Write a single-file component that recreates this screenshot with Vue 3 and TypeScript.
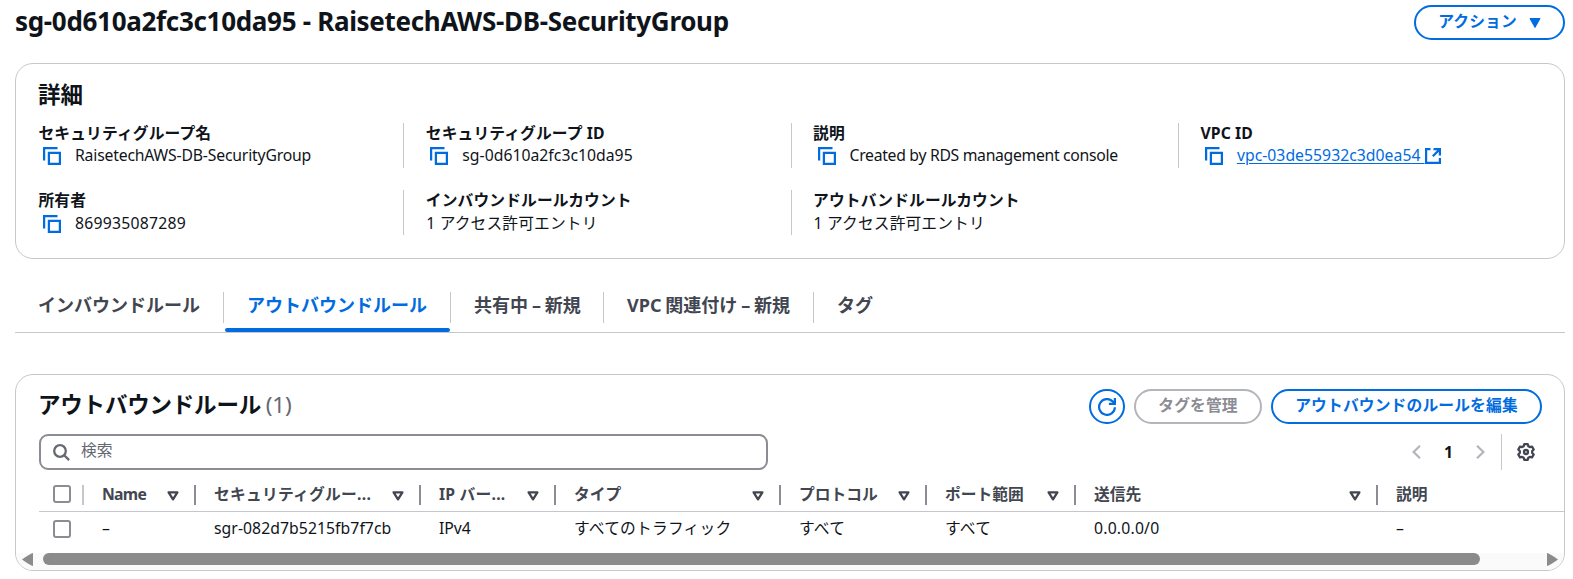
<script setup lang="ts">
interface Detail {
  label: string
  value: string
  copy?: boolean
  link?: boolean
  tracking?: number
}
interface Column {
  title: string
  value: string
  width: number
  titleTracking?: number
  tracking?: number
}
interface Tab {
  title: string
  width: number
}

const columnsOfDetails: Detail[][] = [
  [
    { label: 'セキュリティグループ名', value: 'RaisetechAWS-DB-SecurityGroup', copy: true, tracking: -0.18 },
    { label: '所有者', value: '869935087289', copy: true, tracking: 0.23 },
  ],
  [
    { label: 'セキュリティグループ ID', value: 'sg-0d610a2fc3c10da95', copy: true, tracking: 0.02 },
    { label: 'インバウンドルールカウント', value: '1 アクセス許可エントリ', tracking: 0.12 },
  ],
  [
    { label: '説明', value: 'Created by RDS management console', copy: true, tracking: -0.31 },
    { label: 'アウトバンドルールカウント', value: '1 アクセス許可エントリ', tracking: 0.12 },
  ],
  [{ label: 'VPC ID', value: 'vpc-03de55932c3d0ea54', copy: true, link: true, tracking: 0.03 }],
]

const tabs: Tab[] = [
  { title: 'インバウンドルール', width: 209 },
  { title: 'アウトバウンドルール', width: 227 },
  { title: '共有中 – 新規', width: 153 },
  { title: 'VPC 関連付け – 新規', width: 210 },
  { title: 'タグ', width: 90 },
]
const activeTab = 1

const columns: Column[] = [
  { title: 'Name', value: '–', width: 112, titleTracking: -0.7 },
  { title: 'セキュリティグルー...', value: 'sgr-082d7b5215fb7f7cb', width: 225, titleTracking: 0.25, tracking: 0.06 },
  { title: 'IP バー...', value: 'IPv4', width: 135, titleTracking: 0.2 },
  { title: 'タイプ', value: 'すべてのトラフィック', width: 225, tracking: 0.2 },
  { title: 'プロトコル', value: 'すべて', width: 146, tracking: 0.2 },
  { title: 'ポート範囲', value: 'すべて', width: 149, tracking: 0.2 },
  { title: '送信先', value: '0.0.0.0/0', width: 302, tracking: 0.2 },
  { title: '説明', value: '–', width: 187 },
]

const spacing = (n = 0) => ({ letterSpacing: n + 'px' })
</script>

<template>
  <main class="page">
    <header class="top">
      <h1>sg-0d610a2fc3c10da95 - RaisetechAWS-DB-SecurityGroup</h1>
      <button class="btn actions">
        <span>アクション</span>
        <svg class="caret" viewBox="0 0 12 10"><path d="M1 .5h10L6 9.5z" fill="currentColor" stroke="currentColor" stroke-linejoin="round" /></svg>
      </button>
    </header>

    <section class="card details">
      <h2>詳細</h2>
      <div class="detail-grid">
        <div v-for="(col, c) in columnsOfDetails" :key="c" class="detail-col">
          <div v-for="d in col" :key="d.label" class="detail" :class="{ ruled: c > 0 }">
            <div class="label">{{ d.label }}</div>
            <div class="value">
              <svg v-if="d.copy" class="copy" viewBox="0 0 18 18" fill="none" stroke="currentColor" stroke-width="2.25">
                <path d="M1.100 13.500V1.100h13.400" /><path d="M5.900 5.900h11v11h-11z" />
              </svg>
              <a v-if="d.link" class="link" :style="spacing(d.tracking)">{{ d.value }}&nbsp;</a>
              <span v-else :style="spacing(d.tracking)">{{ d.value }}</span>
              <svg v-if="d.link" class="external" viewBox="0 0 16 16" fill="none" stroke="currentColor" stroke-width="2.2">
                <path d="M5.500 1.100H1.100v13.800h13.800V10" /><path d="M8.500 1.100h6.400v6.400M14.900 1.100L7.800 8.200" />
              </svg>
            </div>
          </div>
        </div>
      </div>
    </section>

    <nav class="tabs">
      <div v-for="(t, i) in tabs" :key="t.title" class="tab" :class="{ active: i === activeTab }" :style="{ width: t.width + 'px' }">
        <span>{{ t.title }}</span>
      </div>
    </nav>

    <section class="card rules">
      <div class="rules-head">
        <h2>アウトバウンドルール <span class="count">(1)</span></h2>
        <div class="buttons">
          <button class="btn refresh">
            <svg viewBox="0 0 18 18" fill="none" stroke="currentColor" stroke-width="2.200">
              <path d="M16.900 9.200a7.900 7.900 0 1 1-2.300-5.800l2 2" /><path d="M16.900 0v5.900h-6" />
            </svg>
          </button>
          <button class="btn manage">タグを管理</button>
          <button class="btn edit">アウトバウンドのルールを編集</button>
        </div>
      </div>

      <div class="tools">
        <div class="search">
          <svg viewBox="0 0 17 17" fill="none" stroke="currentColor" stroke-width="2.3">
            <circle cx="7" cy="7" r="5.800" /><path d="M11.200 11.200l4.900 4.900" />
          </svg>
          <span>検索</span>
        </div>
        <div class="pager">
          <svg class="chev" viewBox="0 0 9 14" fill="none" stroke="currentColor" stroke-width="2.2"><path d="M8 .8L1.600 7 8 13.200" /></svg>
          <span class="current">1</span>
          <svg class="chev" viewBox="0 0 9 14" fill="none" stroke="currentColor" stroke-width="2.2"><path d="M1 .8L7.400 7 1 13.200" /></svg>
          <div class="gear">
            <svg viewBox="0 0 18 18" fill="none" stroke="currentColor" stroke-width="2.3" stroke-linejoin="round">
              <path d="M7.300 1.200h3.400l.6 2 1.600.9 2.100-.5 1.700 2.900-1.500 1.500v2l1.500 1.500-1.700 2.900-2.100-.5-1.600.9-.6 2H7.300l-.6-2-1.600-.9-2.100.5-1.700-2.900L2.800 10V8L1.300 6.500 3 3.600l2.100.5 1.600-.9z" />
              <circle cx="9" cy="9" r="2" />
            </svg>
          </div>
        </div>
      </div>

      <div class="table">
        <div class="row head">
          <div class="check-cell"><span class="box"></span></div>
          <div v-for="(c, i) in columns" :key="i" class="cell" :style="{ width: c.width + 'px' }">
            <span :style="spacing(c.titleTracking)">{{ c.title }}</span>
            <svg v-if="i < columns.length - 1" class="sort" viewBox="0 0 12 10" fill="none" stroke="currentColor" stroke-width="2.3" stroke-linejoin="round"><path d="M1.600 1.300h8.800L6 8.300z" /></svg>
          </div>
        </div>
        <div class="row body">
          <div class="check-cell"><span class="box"></span></div>
          <div v-for="(c, i) in columns" :key="i" class="cell" :style="{ width: c.width + 'px' }">
            <span :style="spacing(c.tracking)">{{ c.value }}</span>
          </div>
        </div>
      </div>

      <div class="scrollbar">
        <svg viewBox="0 0 11 13"><path d="M11 0v13Q9 13 0 6.500Q9 0 11 0z" fill="#8b8b8b" /></svg>
        <div class="thumb"></div>
        <svg viewBox="0 0 11 13"><path d="M0 0v13Q2 13 11 6.500Q2 0 0 0z" fill="#8b8b8b" /></svg>
      </div>
    </section>
  </main>
</template>

<style>
body {
  margin: 0;
  background: #fff;
  overflow: hidden;
}
</style>

<style scoped>
* {
  box-sizing: border-box;
}
.page {
  width: 1573px;
  height: 579px;
  padding: 5px 8px 0 15px;
  overflow: hidden;
  background: #fff;
  color: #0f141a;
  font: 15.75px/22.5px 'Noto Sans', 'Noto Sans CJK JP', sans-serif;
}
svg {
  display: block;
  flex: none;
}
h1,
h2 {
  margin: 0;
  font-weight: 700;
  white-space: nowrap;
}
h1 {
  font-size: 26px;
  line-height: 33px;
  letter-spacing: -0.31px;
}
h2 {
  margin-left: -1px;
  font-size: 22.5px;
  line-height: 27px;
}
.top {
  display: flex;
  justify-content: space-between;
  height: 58px;
}
.btn {
  display: flex;
  align-items: center;
  justify-content: center;
  height: 35px;
  padding: 0 0 2px;
  border: 2px solid currentColor;
  border-radius: 18px;
  background: #fff;
  color: #006ce0;
  font: inherit;
  font-weight: 700;
  letter-spacing: 0.15px;
}
.actions {
  width: 151px;
  gap: 12px;
}
.caret {
  width: 12px;
  height: 10px;
  margin-top: 3px;
}
.card {
  width: 1550px;
  border: 1px solid #c6c6cd;
  border-radius: 18px;
}
.details {
  height: 196px;
  padding: 17px 23px 0;
}
.detail-grid {
  display: flex;
  margin-top: 15px;
}
.detail-col {
  flex: none;
  width: 387.3px;
  display: flex;
  flex-direction: column;
  gap: 22px;
}
.detail {
  height: 45px;
  white-space: nowrap;
}
.detail + .detail .value {
  padding-top: 1px;
}
.ruled {
  margin-left: -23px;
  padding-left: 22px;
  border-left: 1px solid #c6c6cd;
}
.label {
  height: 21px;
  margin-left: -0.5px;
  line-height: 20px;
  font-weight: 700;
  letter-spacing: 0.12px;
}
.value {
  display: flex;
  height: 24px;
  line-height: 23px;
}
.copy {
  width: 18px;
  height: 18px;
  margin: 3px 14px 0 4px;
  color: #006ce0;
}
.link {
  color: #006ce0;
  text-decoration: underline;
  text-underline-offset: 2px;
}
.external {
  width: 16px;
  height: 16px;
  margin-top: 4px;
  color: #006ce0;
}
.tabs {
  display: flex;
  width: 1550px;
  height: 55px;
  margin-top: 19px;
  border-bottom: 1px solid #c6c6cd;
}
.tab {
  height: 54px;
  padding-top: 14px;
  color: #424650;
  font-size: 18px;
  font-weight: 700;
  line-height: 26px;
  white-space: nowrap;
}
.tab span {
  display: block;
  height: 31px;
  padding-left: 23px;
  border-right: 1px solid #c6c6cd;
  word-spacing: -0.8px;
}
.tab:last-child span {
  border-right: 0;
}
.tab.active {
  position: relative;
  color: #006ce0;
}
.tab.active::after {
  content: '';
  position: absolute;
  right: 1px;
  bottom: 0;
  left: 1px;
  height: 4px;
  border-radius: 2px;
  background: #006ce0;
}
.rules {
  height: 197px;
  margin-top: 41px;
  overflow: hidden;
}
.rules-head {
  display: flex;
  justify-content: space-between;
  height: 45px;
  padding: 14px 22px 0 23px;
}
.rules-head h2 {
  padding-top: 2px;
  letter-spacing: -0.2px;
}
.count {
  margin-left: -1px;
  color: #656871;
  font-weight: 400;
}
.buttons {
  display: flex;
  gap: 9px;
}
.refresh {
  width: 36px;
  padding: 0;
}
.refresh svg {
  width: 18px;
  height: 18px;
}
.manage {
  width: 128px;
  border-color: #b4b4bb;
  color: #8c8c94;
}
.edit {
  width: 271px;
}
.tools {
  display: flex;
  justify-content: space-between;
  margin-top: 14px;
  padding: 0 22px 0 23px;
}
.search {
  display: flex;
  width: 729px;
  height: 36px;
  padding-left: 12px;
  border: 2px solid #8c8c94;
  border-radius: 9px;
  color: #656871;
}
.search svg {
  width: 17px;
  height: 17px;
  margin-top: 8px;
}
.search span {
  margin-left: 11px;
  line-height: 29px;
}
.pager {
  display: flex;
  align-items: center;
  color: #b4b4bb;
}
.chev {
  width: 9px;
  height: 14px;
}
.current {
  width: 55px;
  color: #0f141a;
  font-weight: 700;
  text-align: center;
}
.gear {
  display: flex;
  align-items: center;
  height: 36px;
  margin-left: 16px;
  padding: 0 7px 0 15px;
  border-left: 1px solid #c6c6cd;
  color: #424650;
}
.gear svg {
  width: 18px;
  height: 18px;
}
.table {
  width: 1526px;
  margin-left: 23px;
}
.row {
  display: flex;
  white-space: nowrap;
}
.head {
  height: 42px;
  border-bottom: 1px solid #c6c6cd;
  color: #424650;
  font-weight: 700;
}
.check-cell {
  flex: none;
  width: 45px;
  padding: 15px 0 0 14px;
}
.box {
  display: block;
  width: 18px;
  height: 18px;
  border: 2px solid #8c8c94;
  border-radius: 3px;
}
.cell {
  display: flex;
  flex: none;
  justify-content: space-between;
  padding: 13px 17px 0 18px;
}
.head .check-cell {
  background: linear-gradient(#c6c6cd, #c6c6cd) 43px 15px / 2px 20px no-repeat;
}
.head .cell {
  background: linear-gradient(#8c8c94, #8c8c94) right 15px / 2px 20px no-repeat;
}
.head .cell:last-child {
  background: none;
}
.sort {
  width: 12px;
  height: 10px;
  margin-top: 8px;
}
.body {
  height: 41px;
}
.body .check-cell {
  padding-top: 8px;
}
.body .cell {
  padding-top: 5px;
}
.scrollbar {
  display: flex;
  height: 18px;
  padding: 0 6px;
  background: #fafafa;
}
.scrollbar svg {
  width: 11px;
  height: 13px;
}
.thumb {
  width: 1437px;
  height: 12px;
  margin: 0 67px 0 10px;
  border-radius: 6px;
  background: #8b8b8b;
}
</style>
